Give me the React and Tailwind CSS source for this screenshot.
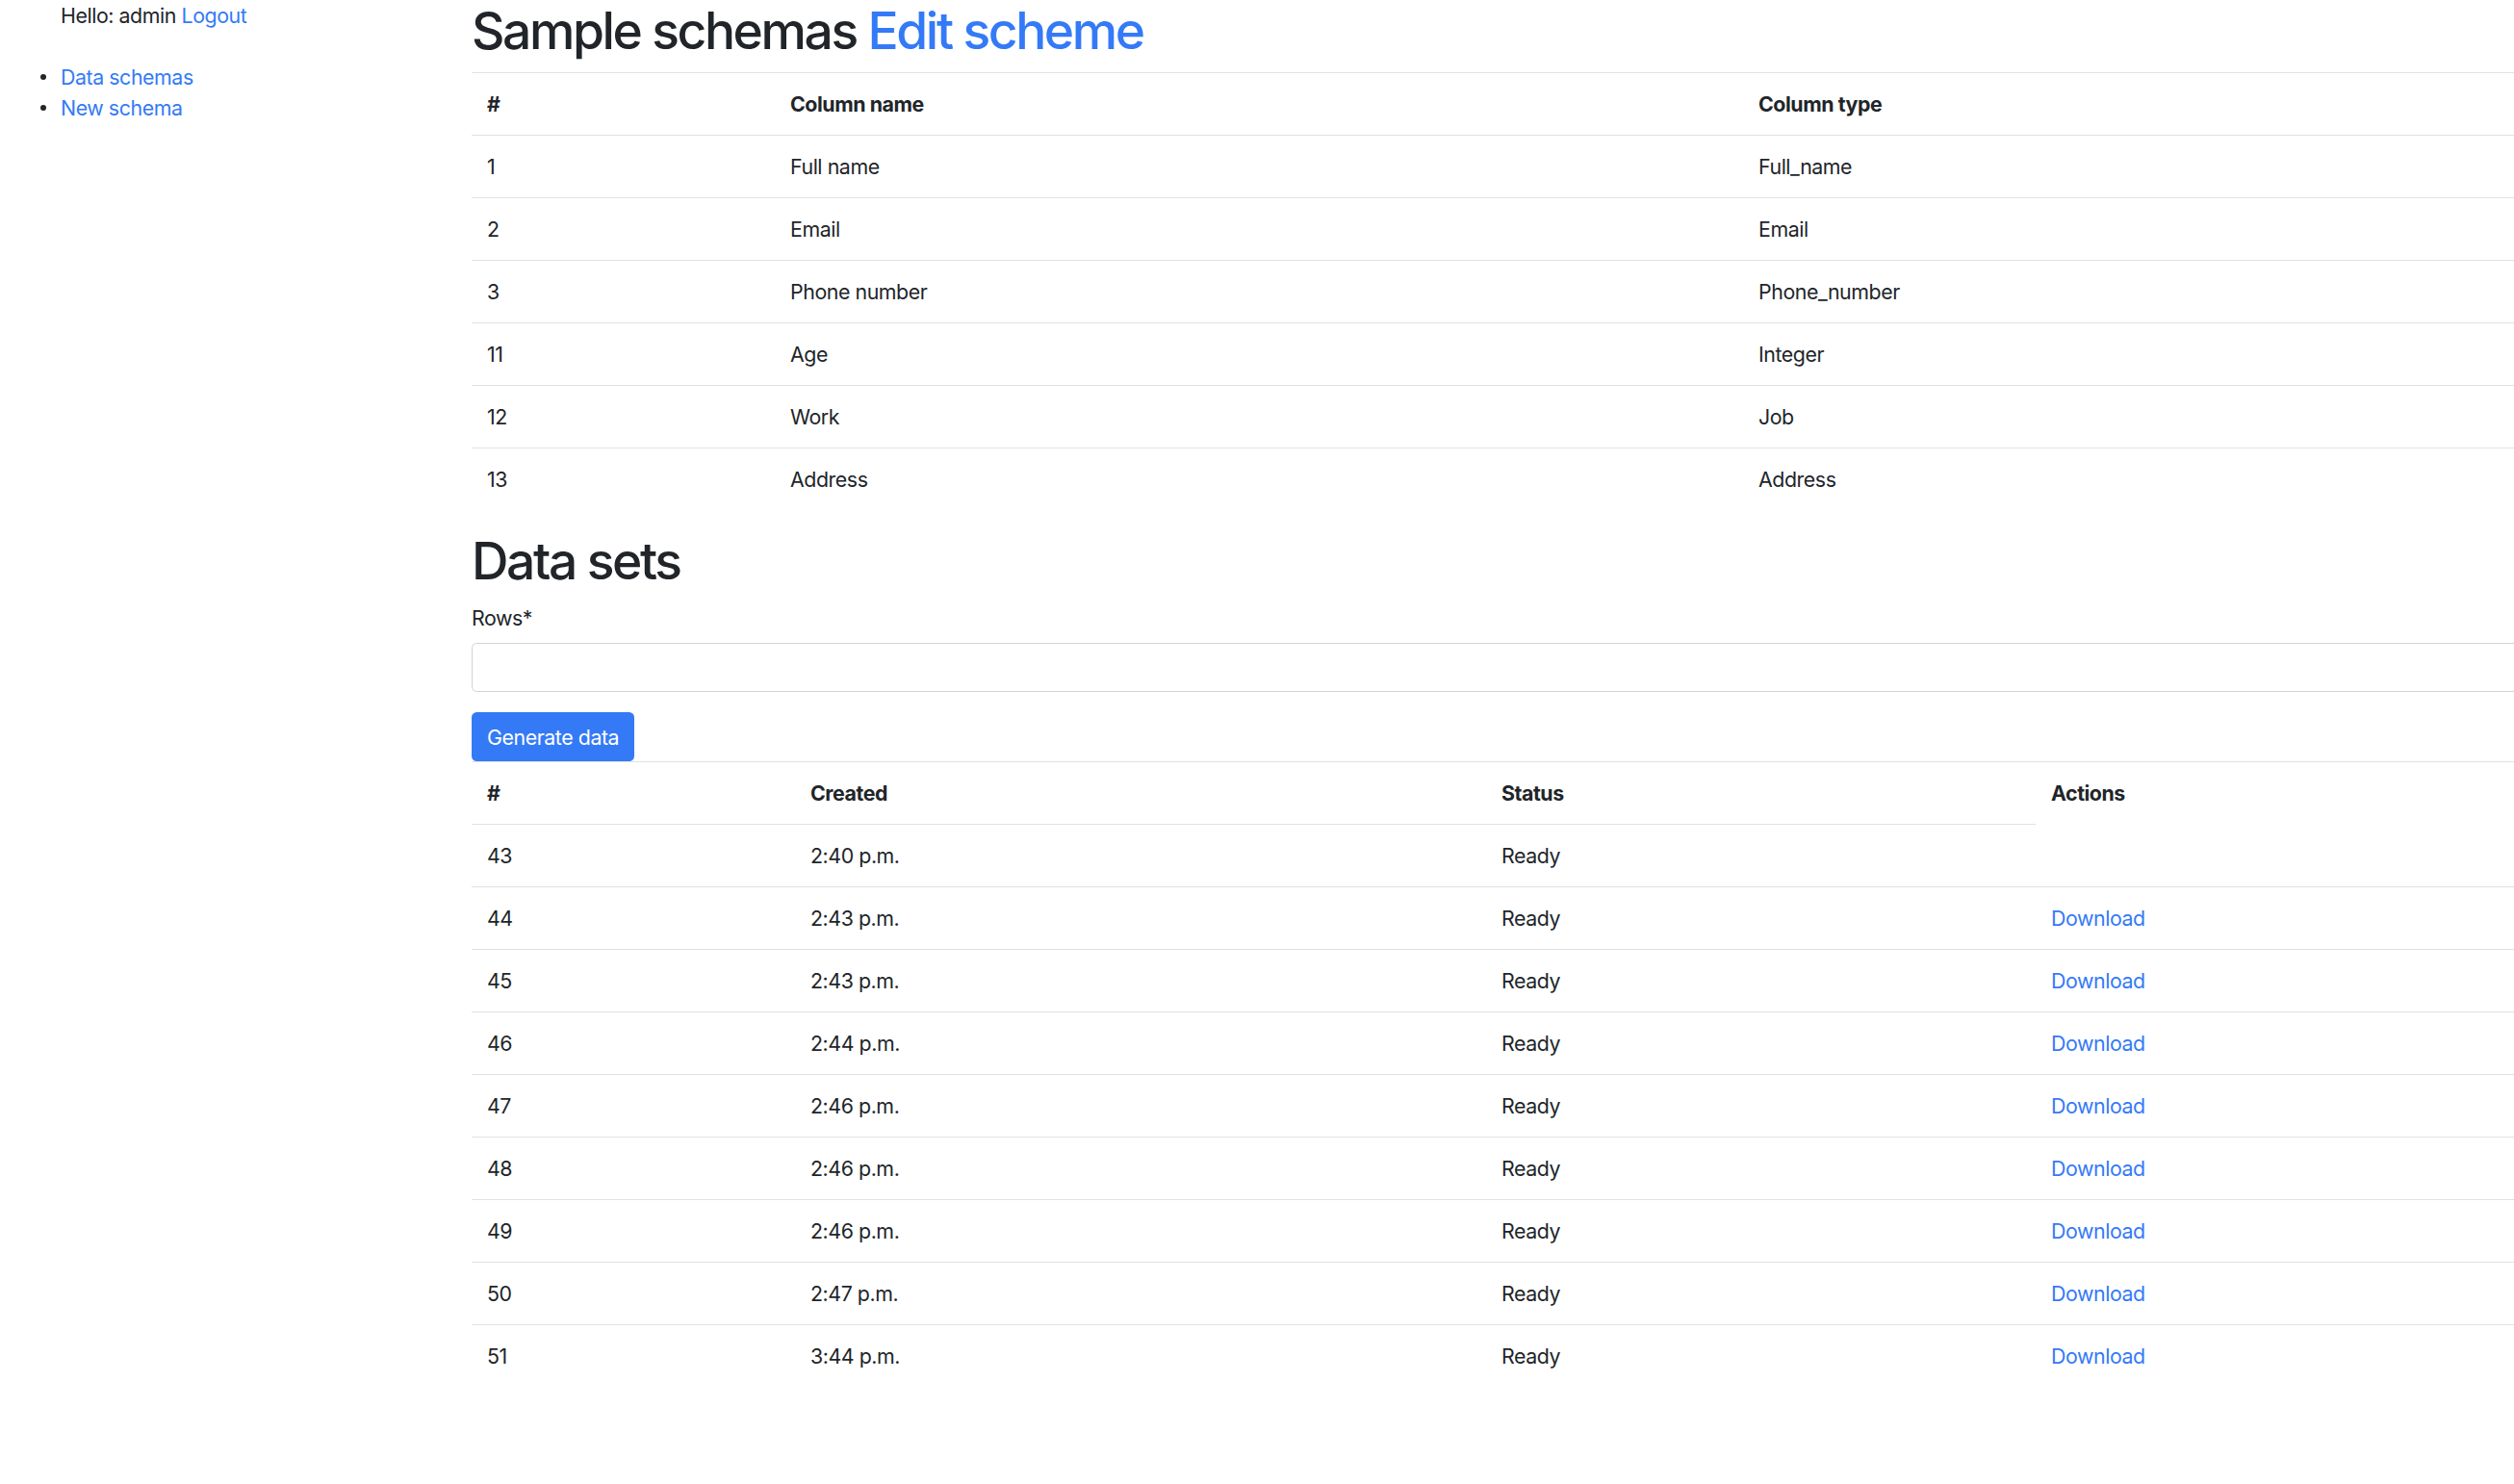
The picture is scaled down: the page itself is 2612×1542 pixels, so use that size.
const schemaColumns = [
  { id: 1, name: "Full name", type: "Full_name" },
  { id: 2, name: "Email", type: "Email" },
  { id: 3, name: "Phone number", type: "Phone_number" },
  { id: 11, name: "Age", type: "Integer" },
  { id: 12, name: "Work", type: "Job" },
  { id: 13, name: "Address", type: "Address" },
];

const dataSets = [
  { id: 43, created: "2:40 p.m.", status: "Ready", download: false },
  { id: 44, created: "2:43 p.m.", status: "Ready", download: true },
  { id: 45, created: "2:43 p.m.", status: "Ready", download: true },
  { id: 46, created: "2:44 p.m.", status: "Ready", download: true },
  { id: 47, created: "2:46 p.m.", status: "Ready", download: true },
  { id: 48, created: "2:46 p.m.", status: "Ready", download: true },
  { id: 49, created: "2:46 p.m.", status: "Ready", download: true },
  { id: 50, created: "2:47 p.m.", status: "Ready", download: true },
  { id: 51, created: "3:44 p.m.", status: "Ready", download: true },
];

const cell = "border-t border-[#dee2e6] px-[16px] py-[16px] text-left align-top font-normal";
const head = "border-t border-[#dee2e6] px-[16px] py-[16px] text-left align-top font-bold";

export default function App() {
  return (
    <div className="flex w-[2612px] h-[1542px] overflow-hidden bg-white text-[#212529] font-['Inter','Liberation_Sans',sans-serif] text-[21.33px] leading-[32px] tracking-[-0.02em]">
      <aside className="w-[490px] shrink-0 pl-[63px]">
        <p>
          Hello: admin <a href="#" className="text-[#347af7]">Logout</a>
        </p>
        <ul className="mt-[32px]">
          {["Data schemas", "New schema"].map((item) => (
            <li key={item} className="flex items-center">
              <span className="ml-[-21px] mr-[15px] w-[6px] h-[6px] rounded-full bg-[#212529]" />
              <a href="#" className="text-[#347af7]">{item}</a>
            </li>
          ))}
        </ul>
      </aside>

      <main className="w-[2200px] shrink-0">
        <h1 className="text-[53.33px] leading-[64px] font-medium tracking-[-0.045em] mb-[10.67px]">
          Sample schemas <a href="#" className="text-[#347af7]">Edit scheme</a>
        </h1>

        <table className="w-full table-fixed border-collapse mb-[21.33px]">
          <colgroup>
            <col className="w-[315px]" />
            <col className="w-[1006px]" />
            <col />
          </colgroup>
          <thead>
            <tr>
              <th className={head}>#</th>
              <th className={head}>Column name</th>
              <th className={head}>Column type</th>
            </tr>
          </thead>
          <tbody>
            {schemaColumns.map((col) => (
              <tr key={col.id}>
                <td className={cell}>{col.id}</td>
                <td className={cell}>{col.name}</td>
                <td className={cell}>{col.type}</td>
              </tr>
            ))}
          </tbody>
        </table>

        <h1 className="text-[53.33px] leading-[64px] font-medium tracking-[-0.045em] mb-[10.67px]">Data sets</h1>

        <form onSubmit={(e) => e.preventDefault()}>
          <label className="block mb-[10.67px]">Rows*</label>
          <input
            type="text"
            className="block w-full h-[50.67px] border border-[#ced4da] rounded-[5.33px] px-[16px] mb-[21.33px] outline-none"
          />
          <button
            type="submit"
            className="h-[50.67px] px-[16px] bg-[#347af7] text-white rounded-[5.33px]"
          >
            Generate data
          </button>
        </form>

        <table className="w-full table-fixed border-collapse">
          <colgroup>
            <col className="w-[336px]" />
            <col className="w-[718px]" />
            <col className="w-[571px]" />
            <col />
          </colgroup>
          <thead>
            <tr>
              <th className={head}>#</th>
              <th className={head}>Created</th>
              <th className={head}>Status</th>
              <th className={head}>Actions</th>
            </tr>
          </thead>
          <tbody>
            {dataSets.map((ds) => (
              <tr key={ds.id}>
                <td className={cell}>{ds.id}</td>
                <td className={cell}>{ds.created}</td>
                <td className={cell}>{ds.status}</td>
                {ds.download && (
                  <td className={cell}>
                    <a href="#" className="text-[#347af7]">Download</a>
                  </td>
                )}
              </tr>
            ))}
          </tbody>
        </table>
      </main>
    </div>
  );
}
